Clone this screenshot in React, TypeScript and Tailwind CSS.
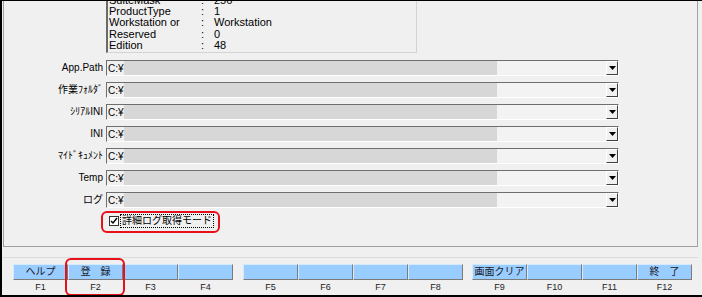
import React from "react";

const infoLines = [
  { k: "SuiteMask", v: "256" },
  { k: "ProductType", v: "1" },
  { k: "Workstation or", v: "Workstation" },
  { k: "Reserved", v: "0" },
  { k: "Edition", v: "48" },
];

const pathRows = ["App.Path", "作業ﾌｫﾙﾀﾞ", "ｼﾘｱﾙINI", "INI", "ﾏｲﾄﾞｷｭﾒﾝﾄ", "Temp", "ログ"];

const fkeyGroups = [
  [
    { key: "F1", label: "ヘルプ" },
    { key: "F2", label: "登　録" },
    { key: "F3", label: "" },
    { key: "F4", label: "" },
  ],
  [
    { key: "F5", label: "" },
    { key: "F6", label: "" },
    { key: "F7", label: "" },
    { key: "F8", label: "" },
  ],
  [
    { key: "F9", label: "画面クリア" },
    { key: "F10", label: "" },
    { key: "F11", label: "" },
    { key: "F12", label: "終　了" },
  ],
];

function DropArrow() {
  return (
    <svg width="7" height="4" viewBox="0 0 7 4">
      <path d="M0 0h7L3.5 4z" fill="#000" />
    </svg>
  );
}

function PathCombo({ label }: { label: string }) {
  return (
    <div className="flex items-center h-[16px]">
      <div className="w-[102px] pr-[3px] text-right text-[10px] leading-none text-black whitespace-nowrap">{label}</div>
      <div className="flex w-[513px] h-[16px] border-t border-l border-[#6e6e6e] border-b border-r border-b-white border-r-white">
        <div className="w-[17px] bg-[#f0f0f0] pl-[1px] text-[10px] leading-[15px] text-black whitespace-nowrap overflow-hidden">C:¥</div>
        <div className="w-[373px] bg-[#d7d7d7]" />
        <div className="flex-1 bg-[#f3f3f3] flex justify-end items-center">
          <div className="w-[12px] h-[14px] flex items-center justify-center bg-[#f0f0f0] border-t border-l border-white border-r border-b border-r-[#404040] border-b-[#404040]">
            <DropArrow />
          </div>
        </div>
      </div>
    </div>
  );
}

export default function App() {
  return (
    <div
      className="relative w-[702px] h-[297px] overflow-hidden flex flex-col bg-[#f0f0f0] border-t border-b-2 border-l-2 border-black"
      style={{ fontFamily: '"Liberation Sans", "Noto Sans CJK JP", sans-serif' }}
    >
      <div className="h-[246px] ml-[1px] mr-[4px] border-l border-r border-b border-[#a0a0a0] flex flex-col">
        <div className="ml-[102px] -mt-[6px] w-[311px] h-[58px] border-l-2 border-l-[#6a6a6a] border-r border-b border-[#d4d4d4] pl-[1px] overflow-hidden">
          {infoLines.map((l) => (
            <div key={l.k} className="flex text-[11px] leading-[11.2px] text-black">
              <span className="w-[92px]">{l.k}</span>
              <span className="w-[13px]">:</span>
              <span>{l.v}</span>
            </div>
          ))}
        </div>

        <div className="mt-[7px] flex flex-col gap-[6px]">
          {pathRows.map((r) => (
            <PathCombo key={r} label={r} />
          ))}
        </div>

        <div className="mt-[6px] ml-[105px] flex items-center gap-[1px]">
          <div className="w-[10px] h-[10px] bg-white border border-[#333] flex items-center justify-center">
            <svg width="8" height="8" viewBox="0 0 8 8">
              <path d="M1 4l2 2 4-5" stroke="#000" strokeWidth="1.5" fill="none" />
            </svg>
          </div>
          <div className="px-[1px] h-[14px] flex items-center border border-dotted border-black text-[10px] leading-none text-black">
            詳細ログ取得モード
          </div>
        </div>
      </div>

      <div className="flex-1 mr-[4px] flex flex-col">
        <div className="mt-[10px] border-t border-[#dcdcdc] pt-[6px] pl-[11px] flex">
          {fkeyGroups.map((g, gi) => (
            <div key={gi} className={gi === 0 ? "flex mr-[10px]" : gi === 1 ? "flex mr-[9px]" : "flex"}>
              {g.map((b) => (
                <div key={b.key} className="w-[55px] flex flex-col items-center">
                  <div className="w-full h-[16px] bg-[#99ccff] border-t border-l border-[#d6eaff] border-r border-b border-r-[#7b7b7b] border-b-[#7b7b7b] flex items-center justify-center text-[10px] leading-none text-[#1a1a2a]">
                    {b.label}
                  </div>
                  <div className="mt-[3px] text-[9px] leading-none text-[#222]">{b.key}</div>
                </div>
              ))}
            </div>
          ))}
        </div>
      </div>

      <div className="absolute left-[99px] top-[210px] w-[119px] h-[22px] rounded-[6px] border-2 border-[#e8101a]" />
      <div className="absolute left-[63px] top-[257px] w-[60px] h-[38px] rounded-[6px] border-2 border-[#e8101a]" />
    </div>
  );
}
